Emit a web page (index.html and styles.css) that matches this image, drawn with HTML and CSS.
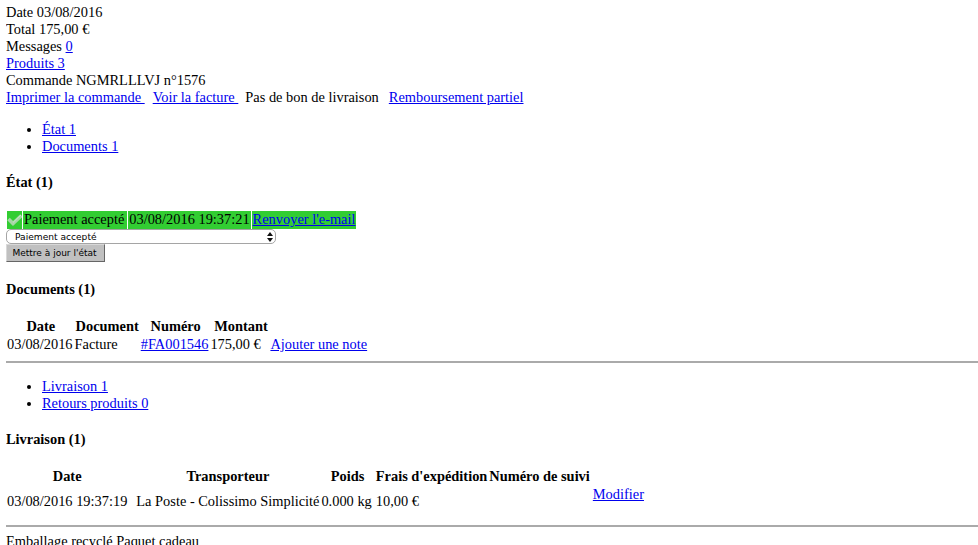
FILE: index.html
```html
<!DOCTYPE html>
<html lang="fr">
<head>
<meta charset="utf-8">
<title>Commande NGMRLLLVJ n°1576</title>
<link rel="stylesheet" href="styles.css">
</head>
<body>
<div>Date 03/08/2016</div>
<div>Total 175,00 €</div>
<div>Messages <a href="#">0</a></div>
<div><a href="#">Produits 3</a></div>
<div>Commande NGMRLLLVJ n°1576</div>
<div class="actions"><a href="#">Imprimer la commande&nbsp;</a><a href="#">Voir la facture&nbsp;</a><span>Pas de bon de livraison</span><a href="#">Remboursement partiel</a></div>
<ul>
<li><a href="#">État 1</a></li>
<li><a href="#">Documents 1</a></li>
</ul>
<h4>État (1)</h4>
<table class="status">
<tr>
<td class="status-icon"><svg width="15" height="16" viewBox="0 0 15 16"><path d="M1.5 7 L6 11.5 L14.5 3.5" fill="none" stroke="#a6d6a6" stroke-width="3.6"/><path d="M6 10.5 L14 3" fill="none" stroke="#c4e6c4" stroke-width="1"/></svg></td>
<td class="status-name">Paiement accepté</td>
<td class="status-date">03/08/2016 19:37:21</td>
<td class="status-link"><a href="#">Renvoyer l'e-mail</a></td>
</tr>
</table>
<form>
<div class="select-box"><span>Paiement accepté</span><svg width="6" height="10" viewBox="0 0 6 10"><path d="M3 0 L6 4 H0 Z M3 10 L0 6 H6 Z" fill="#111"/></svg></div>
<div class="submit">Mettre à jour l'état</div>
</form>
<h4>Documents (1)</h4>
<table class="docs">
<tr><th>Date</th><th class="doc-type">Document</th><th>Numéro</th><th class="amount">Montant</th><th></th></tr>
<tr><td>03/08/2016</td><td>Facture</td><td><a href="#">#FA001546</a></td><td class="amount">175,00 €</td><td class="note"><a href="#">Ajouter une note</a></td></tr>
</table>
<hr>
<ul>
<li><a href="#">Livraison 1</a></li>
<li><a href="#">Retours produits 0</a></li>
</ul>
<h4>Livraison (1)</h4>
<table class="shipping">
<tr><th class="ship-date">Date</th><th>Transporteur</th><th>Poids</th><th>Frais d'expédition</th><th class="ship-track">Numéro de suivi</th><th></th></tr>
<tr><td class="ship-date">03/08/2016 19:37:19</td><td>La Poste - Colissimo Simplicité</td><td class="ship-weight">0.000 kg</td><td>10,00 €</td><td></td><td class="track"><a href="#">Modifier</a></td></tr>
</table>
<hr class="last">
<div>Emballage recyclé Paquet cadeau</div>
</body>
</html>
```
FILE: styles.css
```css
html, body { overflow: hidden; }
body {
  margin: 4px 0 0 6px;
  font: 14.4px/17px "Liberation Serif", "Times New Roman", serif;
  color: #000;
  background: #fff;
}
a { color: #00e; }
.actions a, .actions span { margin-right: 10px; }
.actions a:first-child { margin-right: 8px; }
.actions span { margin-left: -3px; }
ul { margin: 15px 0 0; padding-left: 36px; }
h4 { margin: 19px 0 0; font-size: 14.4px; line-height: 17px; font-weight: bold; }
table { border-collapse: separate; border-spacing: 0 1px; }
td, th { padding: 0 1px; font-size: 14.4px; line-height: 17px; }
.status { margin-top: 20px; border-spacing: 1px 0; }
.status td { background: #32cd32; height: 18px; white-space: nowrap; padding: 0 0 1px; box-sizing: border-box; }
.status td.status-icon { width: 15px; line-height: 0; padding: 0; }
.status td.status-name { padding-left: 1px; padding-right: 3px; }
.status td.status-date { padding-left: 1px; padding-right: 1px; }
.status td.status-link { padding-left: 1px; }
.select-box {
  box-sizing: border-box;
  width: 270px;
  height: 15px;
  border: 1px solid #a5a5a5;
  border-radius: 5px;
  background: #fff;
  font: 9.1px/13px "DejaVu Sans", Verdana, sans-serif;
  display: flex;
  justify-content: space-between;
  align-items: center;
  padding: 1px 0 0 8px;
}
.select-box svg { margin: -1px 2px 0 0; }
.submit {
  box-sizing: border-box;
  width: 99px;
  height: 18px;
  padding-right: 2px;
  background: #c0c0c0;
  border: 1px solid;
  border-color: #d8d8d8 #666 #666 #d8d8d8;
  font: 9px/16px "DejaVu Sans", Verdana, sans-serif;
  text-align: center;
}
.docs { margin-top: 19px; }
.docs th { padding: 0 0 0 2px; }
.docs th.doc-type { padding: 0 1px 0 2px; }
.docs .amount { width: 59px; }
.docs td.note { padding-left: 0; }
hr { margin: 7px 0 0; border: 0; border-top: 2px solid #aaa; }
.shipping { margin-top: 19px; }
.shipping td { height: 31px; }
.shipping .ship-date { padding-right: 8px; }
.shipping .ship-weight { padding-right: 3px; }
.shipping .ship-track { padding-right: 2px; }
.shipping td.track { vertical-align: top; }
hr.last { margin-top: 7px; }
hr.last + div { margin-top: 6px; }
```
